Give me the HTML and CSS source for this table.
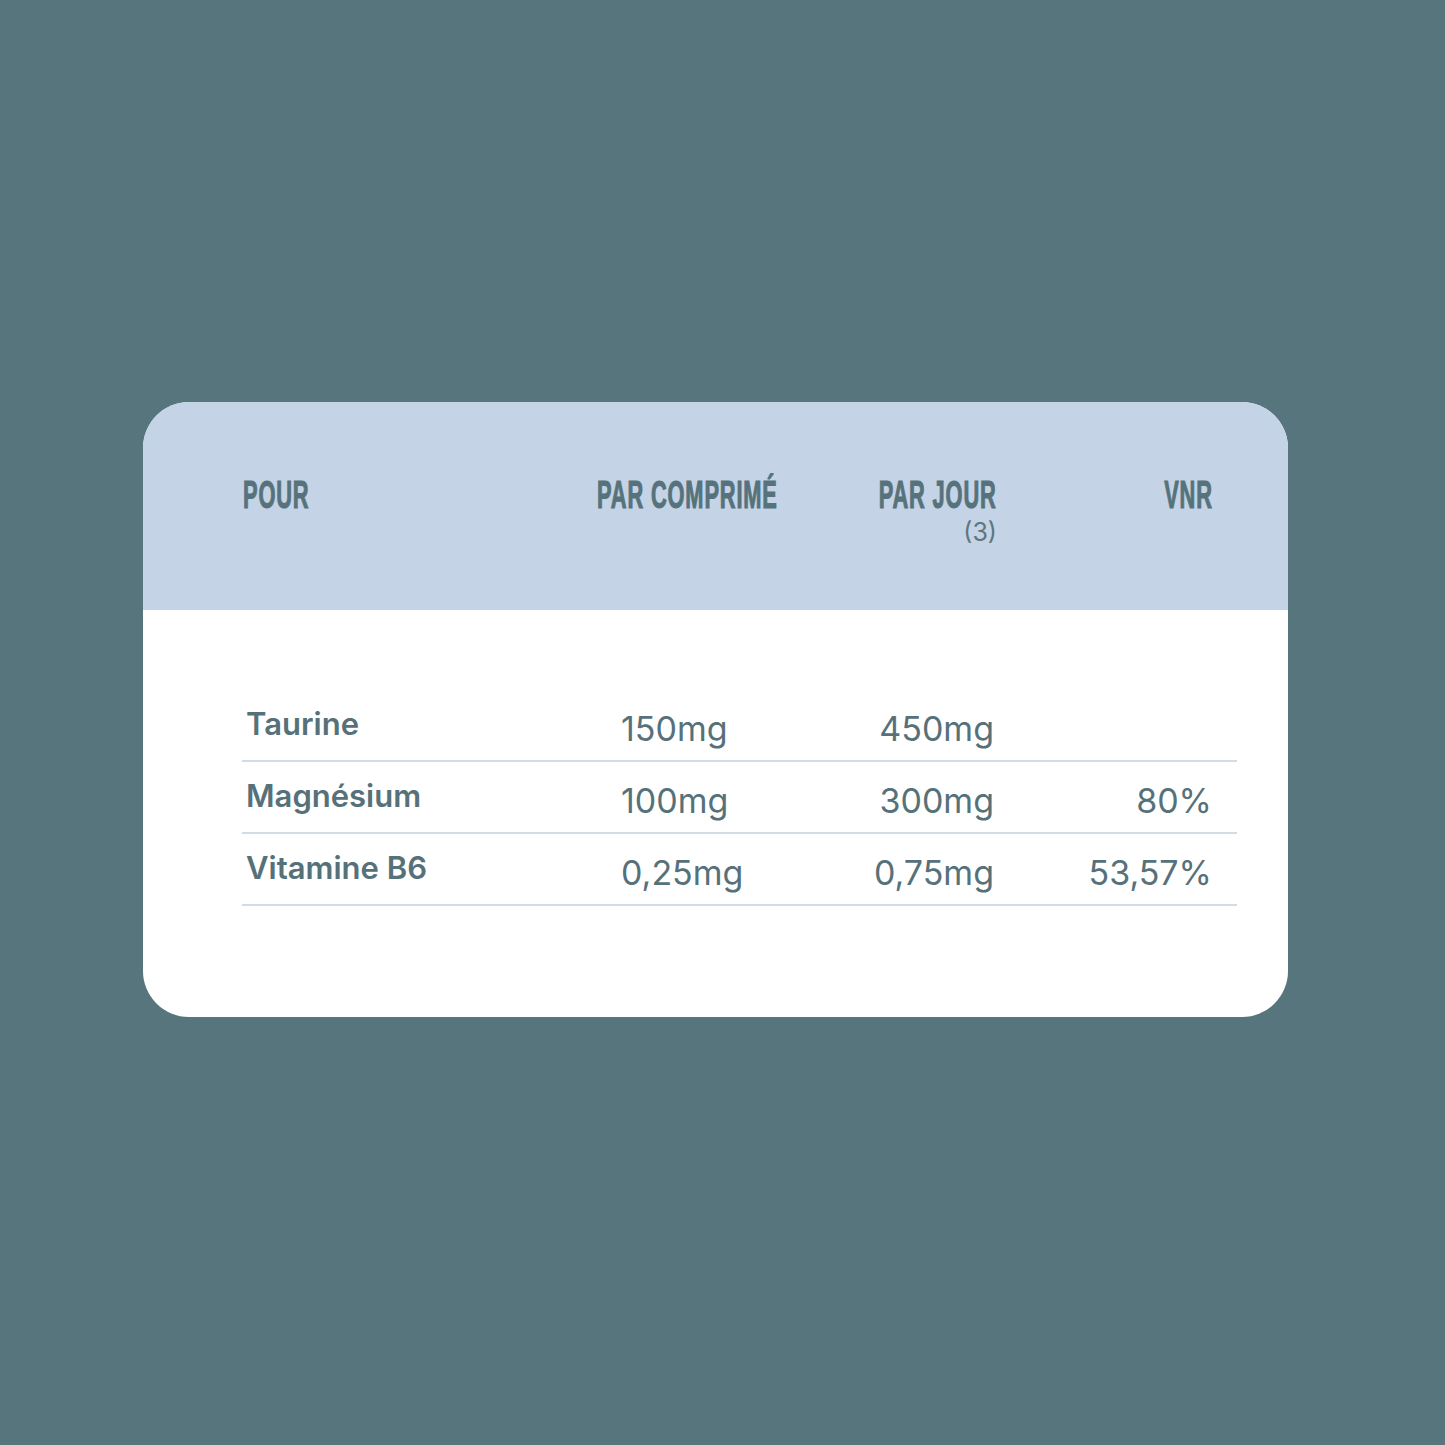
FILE: index.html
```html
<!DOCTYPE html>
<html lang="fr">
<head>
<meta charset="utf-8">
<title>Valeurs nutritionnelles</title>
<link rel="stylesheet" href="styles.css">
</head>
<body>
<div class="page">
  <div class="card">
    <div class="card-head">
      <div class="h-col h-pour"><span class="cond left">POUR</span></div>
      <div class="h-col h-comp"><span class="cond left">PAR COMPRIMÉ</span></div>
      <div class="h-col h-jour"><span class="cond right">PAR JOUR</span><span class="sub">(3)</span></div>
      <div class="h-col h-vnr"><span class="cond right">VNR</span></div>
    </div>
    <div class="card-body">
      <div class="row">
        <div class="name">Taurine</div>
        <div class="val c2">150mg</div>
        <div class="val c3">450mg</div>
        <div class="val c4"></div>
      </div>
      <div class="row">
        <div class="name">Magnésium</div>
        <div class="val c2">100mg</div>
        <div class="val c3">300mg</div>
        <div class="val c4">80%</div>
      </div>
      <div class="row">
        <div class="name">Vitamine B6</div>
        <div class="val c2">0,25mg</div>
        <div class="val c3">0,75mg</div>
        <div class="val c4">53,57%</div>
      </div>
    </div>
  </div>
</div>
</body>
</html>
```

FILE: styles.css
```css
html, body {
  margin: 0;
  padding: 0;
}
body {
  background: #57757d;
  font-family: Inter, "Liberation Sans", sans-serif;
  color: #56717a;
}
.page {
  width: 1445px;
  height: 1445px;
  display: flex;
  align-items: flex-start;
  justify-content: flex-start;
  padding: 402px 0 0 143px;
  box-sizing: border-box;
}
.card {
  width: 1145px;
  height: 615px;
  background: #ffffff;
  border-radius: 46px;
  overflow: hidden;
  display: flex;
  flex-direction: column;
}
.card-head {
  height: 208px;
  background: #c4d3e6;
  display: grid;
  grid-template-columns: 354px 240px 158px 216px;
  padding-left: 100px;
  padding-top: 71px;
  box-sizing: border-box;
  align-items: start;
}
.h-col {
  display: flex;
  flex-direction: column;
}
.h-jour, .h-vnr {
  align-items: flex-end;
}
.cond {
  display: inline-block;
  font-family: "Liberation Sans Narrow", "Liberation Sans", sans-serif;
  font-weight: 700;
  font-size: 39px;
  line-height: 44px;
  letter-spacing: 1.5px;
  transform: scaleX(0.56);
  white-space: nowrap;
  color: #56727b;
  -webkit-text-stroke: 1.1px #56727b;
}
.cond.left { transform-origin: left center; }
.cond.right { transform-origin: right center; margin-right: -1.5px; }
.sub {
  font-family: Inter, "Liberation Sans", sans-serif;
  font-size: 25px;
  line-height: 30px;
  margin-right: -2px;
  margin-top: 0;
  color: #5d767f;
}
.card-body {
  padding: 80px 51px 0 99px;
  display: flex;
  flex-direction: column;
}
.row {
  display: grid;
  grid-template-columns: 379px 250px 123px 218px;
  height: 72px;
  box-sizing: border-box;
  border-bottom: 2px solid #d3dbe5;
  align-items: center;
}
.name {
  font-weight: 600;
  font-size: 31px;
  padding-left: 4px;
  margin-top: -4px;
}
.val {
  font-weight: 400;
  font-size: 34px;
  margin-top: 6px;
}
.c3, .c4 {
  text-align: right;
}
```
